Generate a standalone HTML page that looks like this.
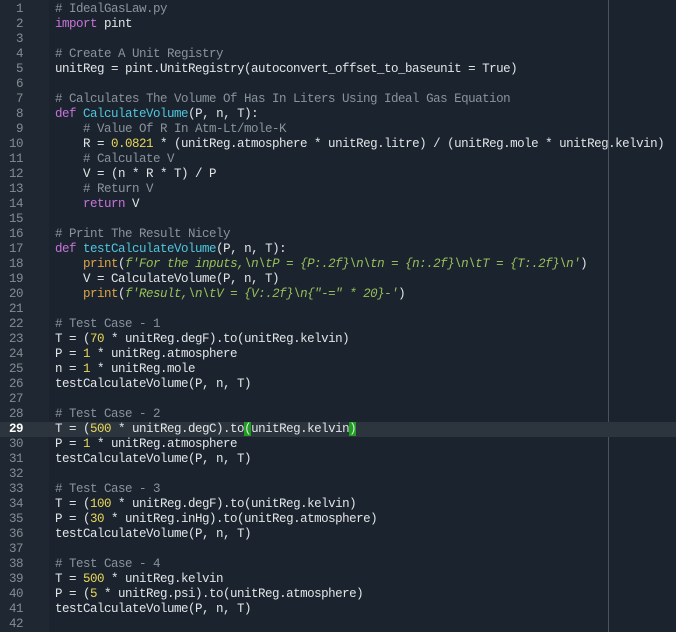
<!DOCTYPE html>
<html><head><style>
body{margin:0;width:676px;height:632px;background:#1b242e;overflow:hidden;font-family:"Liberation Mono","DejaVu Sans Mono",monospace;font-size:12.5px;letter-spacing:-0.5px;}
#g{position:absolute;left:0;top:0;width:49px;height:632px;background:#1f2832;}
#vl{position:absolute;left:608px;top:0;width:1px;height:632px;background:#4a535c;}
.l{position:absolute;left:0;width:676px;height:15px;line-height:15px;white-space:pre;color:#e2e4e6;}
.n{position:absolute;left:0;width:23px;text-align:right;color:#848b93;}
.c{position:absolute;left:55px;}
.hl{background:#2c343d;}
.hl .n{color:#ffffff;font-weight:bold;}
.cm{color:#8a939c}.k{color:#c773d9}.f{color:#4fc6de}.d{color:#e8d75a}.p{color:#e0a447}.s{color:#98bf5a;font-style:italic}
.br{background:#1e9e1e;}
</style></head><body>
<div id="g"></div><div id="vl"></div>
<div class="l" style="top:2px"><span class="n">1</span><span class="c"><span class="cm"># IdealGasLaw.py</span></span></div>
<div class="l" style="top:17px"><span class="n">2</span><span class="c"><span class="k">import</span> pint</span></div>
<div class="l" style="top:32px"><span class="n">3</span></div>
<div class="l" style="top:47px"><span class="n">4</span><span class="c"><span class="cm"># Create A Unit Registry</span></span></div>
<div class="l" style="top:62px"><span class="n">5</span><span class="c">unitReg = pint.UnitRegistry(autoconvert_offset_to_baseunit = True)</span></div>
<div class="l" style="top:77px"><span class="n">6</span></div>
<div class="l" style="top:92px"><span class="n">7</span><span class="c"><span class="cm"># Calculates The Volume Of Has In Liters Using Ideal Gas Equation</span></span></div>
<div class="l" style="top:107px"><span class="n">8</span><span class="c"><span class="k">def</span> <span class="f">CalculateVolume</span>(P, n, T):</span></div>
<div class="l" style="top:122px"><span class="n">9</span><span class="c">    <span class="cm"># Value Of R In Atm-Lt/mole-K</span></span></div>
<div class="l" style="top:137px"><span class="n">10</span><span class="c">    R = <span class="d">0.0821</span> * (unitReg.atmosphere * unitReg.litre) / (unitReg.mole * unitReg.kelvin)</span></div>
<div class="l" style="top:152px"><span class="n">11</span><span class="c">    <span class="cm"># Calculate V</span></span></div>
<div class="l" style="top:167px"><span class="n">12</span><span class="c">    V = (n * R * T) / P</span></div>
<div class="l" style="top:182px"><span class="n">13</span><span class="c">    <span class="cm"># Return V</span></span></div>
<div class="l" style="top:197px"><span class="n">14</span><span class="c">    <span class="k">return</span> V</span></div>
<div class="l" style="top:212px"><span class="n">15</span></div>
<div class="l" style="top:227px"><span class="n">16</span><span class="c"><span class="cm"># Print The Result Nicely</span></span></div>
<div class="l" style="top:242px"><span class="n">17</span><span class="c"><span class="k">def</span> <span class="f">testCalculateVolume</span>(P, n, T):</span></div>
<div class="l" style="top:257px"><span class="n">18</span><span class="c">    <span class="p">print</span>(<span class="s">f'For the inputs,\n\tP = {P:.2f}\n\tn = {n:.2f}\n\tT = {T:.2f}\n'</span>)</span></div>
<div class="l" style="top:272px"><span class="n">19</span><span class="c">    V = CalculateVolume(P, n, T)</span></div>
<div class="l" style="top:287px"><span class="n">20</span><span class="c">    <span class="p">print</span>(<span class="s">f'Result,\n\tV = {V:.2f}\n{"-=" * 20}-'</span>)</span></div>
<div class="l" style="top:302px"><span class="n">21</span></div>
<div class="l" style="top:317px"><span class="n">22</span><span class="c"><span class="cm"># Test Case - 1</span></span></div>
<div class="l" style="top:332px"><span class="n">23</span><span class="c">T = (<span class="d">70</span> * unitReg.degF).to(unitReg.kelvin)</span></div>
<div class="l" style="top:347px"><span class="n">24</span><span class="c">P = <span class="d">1</span> * unitReg.atmosphere</span></div>
<div class="l" style="top:362px"><span class="n">25</span><span class="c">n = <span class="d">1</span> * unitReg.mole</span></div>
<div class="l" style="top:377px"><span class="n">26</span><span class="c">testCalculateVolume(P, n, T)</span></div>
<div class="l" style="top:392px"><span class="n">27</span></div>
<div class="l" style="top:407px"><span class="n">28</span><span class="c"><span class="cm"># Test Case - 2</span></span></div>
<div class="l hl" style="top:422px"><span class="n">29</span><span class="c">T = (<span class="d">500</span> * unitReg.degC).to<span class="br">(</span>unitReg.kelvin<span class="br">)</span></span></div>
<div class="l" style="top:437px"><span class="n">30</span><span class="c">P = <span class="d">1</span> * unitReg.atmosphere</span></div>
<div class="l" style="top:452px"><span class="n">31</span><span class="c">testCalculateVolume(P, n, T)</span></div>
<div class="l" style="top:467px"><span class="n">32</span></div>
<div class="l" style="top:482px"><span class="n">33</span><span class="c"><span class="cm"># Test Case - 3</span></span></div>
<div class="l" style="top:497px"><span class="n">34</span><span class="c">T = (<span class="d">100</span> * unitReg.degF).to(unitReg.kelvin)</span></div>
<div class="l" style="top:512px"><span class="n">35</span><span class="c">P = (<span class="d">30</span> * unitReg.inHg).to(unitReg.atmosphere)</span></div>
<div class="l" style="top:527px"><span class="n">36</span><span class="c">testCalculateVolume(P, n, T)</span></div>
<div class="l" style="top:542px"><span class="n">37</span></div>
<div class="l" style="top:557px"><span class="n">38</span><span class="c"><span class="cm"># Test Case - 4</span></span></div>
<div class="l" style="top:572px"><span class="n">39</span><span class="c">T = <span class="d">500</span> * unitReg.kelvin</span></div>
<div class="l" style="top:587px"><span class="n">40</span><span class="c">P = (<span class="d">5</span> * unitReg.psi).to(unitReg.atmosphere)</span></div>
<div class="l" style="top:602px"><span class="n">41</span><span class="c">testCalculateVolume(P, n, T)</span></div>
<div class="l" style="top:617px"><span class="n">42</span></div>
</body></html>
